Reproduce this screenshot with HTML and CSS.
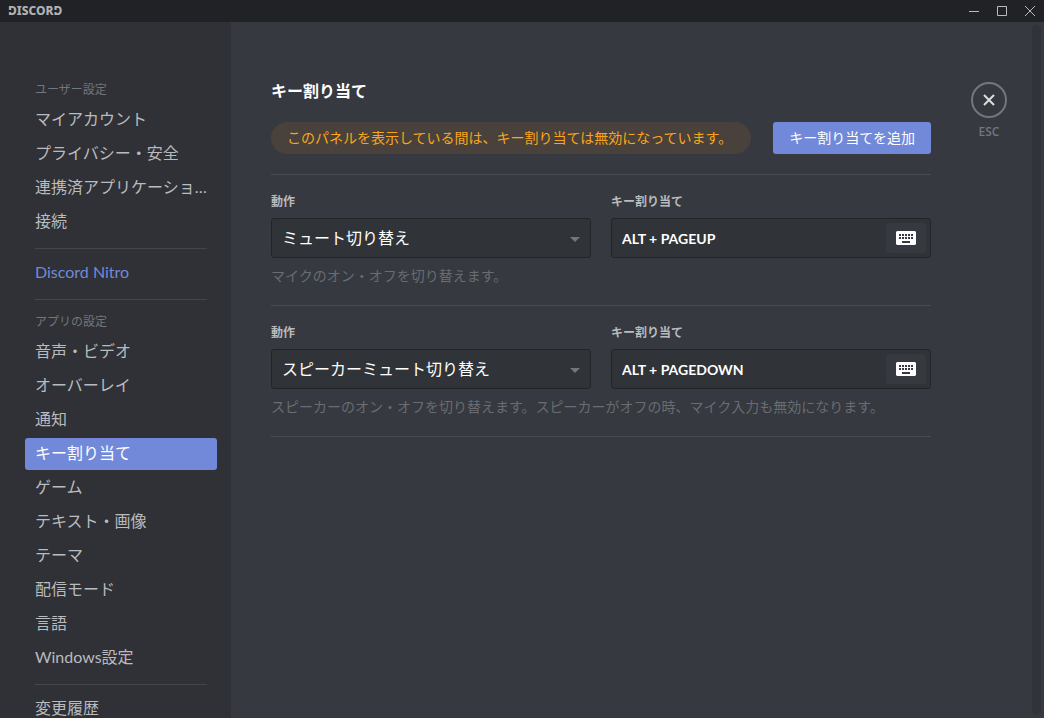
FILE: index.html
```
<!DOCTYPE html>
<html lang="ja">
<head>
<meta charset="utf-8">
<title>Discord</title>
<link rel="stylesheet" href="styles.css">
</head>
<body>
<div class="app">
  <header class="titlebar">
    <div class="wordmark"><span class="notched">D</span>ISCOR<span class="notched">D</span></div>
    <div class="window-controls">
      <button class="window-button" type="button" aria-label="最小化"><svg width="10" height="10" viewBox="0 0 10 10"><path d="M0 5.5h10"/></svg></button>
      <button class="window-button" type="button" aria-label="最大化"><svg width="10" height="10" viewBox="0 0 10 10"><path d="M.5.5h9v9h-9z"/></svg></button>
      <button class="window-button" type="button" aria-label="閉じる"><svg width="10" height="10" viewBox="0 0 10 10"><path d="M0 0l10 10M10 0L0 10"/></svg></button>
    </div>
  </header>
  <div class="body">
    <nav class="sidebar">
      <h2 class="nav-header">ユーザー設定</h2>
      <a class="nav-item" href="#">マイアカウント</a>
      <a class="nav-item" href="#">プライバシー・安全</a>
      <a class="nav-item" href="#">連携済アプリケーション</a>
      <a class="nav-item" href="#">接続</a>
      <hr class="nav-line">
      <a class="nav-item nitro" href="#">Discord Nitro</a>
      <hr class="nav-line">
      <h2 class="nav-header">アプリの設定</h2>
      <a class="nav-item" href="#">音声・ビデオ</a>
      <a class="nav-item" href="#">オーバーレイ</a>
      <a class="nav-item" href="#">通知</a>
      <a class="nav-item selected" href="#" aria-current="page">キー割り当て</a>
      <a class="nav-item" href="#">ゲーム</a>
      <a class="nav-item" href="#">テキスト・画像</a>
      <a class="nav-item" href="#">テーマ</a>
      <a class="nav-item" href="#">配信モード</a>
      <a class="nav-item" href="#">言語</a>
      <a class="nav-item" href="#">Windows設定</a>
      <hr class="nav-line">
      <a class="nav-item" href="#">変更履歴</a>
    </nav>
    <main class="main">
      <section class="content">
        <h1 class="title">キー割り当て</h1>
        <div class="top-row">
          <p class="notice">このパネルを表示している間は、キー割り当ては無効になっています。</p>
          <button class="add" type="button">キー割り当てを追加</button>
        </div>
        <div class="bind">
          <div class="fields">
            <div class="field">
              <label class="label" for="action1">動作</label>
              <div class="box">
                <select class="select" id="action1"><option>ミュート切り替え</option></select>
                <svg class="caret" width="10" height="5" viewBox="0 0 10 5"><path d="M0 0h10L5 5z"/></svg>
              </div>
            </div>
            <div class="field">
              <label class="label" for="key1">キー割り当て</label>
              <div class="box">
                <input class="key" id="key1" type="text" value="ALT + PAGEUP" readonly>
                <button class="record" type="button" aria-label="キーを記録"><svg width="20" height="14" viewBox="0 0 20 14"><path fill-rule="evenodd" d="M1 0h18l1 1v12l-1 1H1l-1-1V1zM3 3v2h2V3zM6 3v2h2V3zM9 3v2h2V3zM12 3v2h2V3zM15 3v2h2V3zM3 6v2h2V6zM6 6v2h2V6zM9 6v2h2V6zM12 6v2h2V6zM15 6v2h2V6zM6 10v2h8v-2z"/></svg></button>
              </div>
            </div>
          </div>
          <p class="help">マイクのオン・オフを切り替えます。</p>
        </div>
        <div class="bind">
          <div class="fields">
            <div class="field">
              <label class="label" for="action2">動作</label>
              <div class="box">
                <select class="select" id="action2"><option>スピーカーミュート切り替え</option></select>
                <svg class="caret" width="10" height="5" viewBox="0 0 10 5"><path d="M0 0h10L5 5z"/></svg>
              </div>
            </div>
            <div class="field">
              <label class="label" for="key2">キー割り当て</label>
              <div class="box">
                <input class="key" id="key2" type="text" value="ALT + PAGEDOWN" readonly>
                <button class="record" type="button" aria-label="キーを記録"><svg width="20" height="14" viewBox="0 0 20 14"><path fill-rule="evenodd" d="M1 0h18l1 1v12l-1 1H1l-1-1V1zM3 3v2h2V3zM6 3v2h2V3zM9 3v2h2V3zM12 3v2h2V3zM15 3v2h2V3zM3 6v2h2V6zM6 6v2h2V6zM9 6v2h2V6zM12 6v2h2V6zM15 6v2h2V6zM6 10v2h8v-2z"/></svg></button>
              </div>
            </div>
          </div>
          <p class="help">スピーカーのオン・オフを切り替えます。スピーカーがオフの時、マイク入力も無効になります。</p>
        </div>
      </section>
      <div class="close-area">
        <button class="close" type="button" aria-label="閉じる"><svg width="12" height="12" viewBox="0 0 12 12"><path d="M1 1l10 10M11 1L1 11"/></svg></button>
        <span class="esc">ESC</span>
      </div>
      <div class="scroll-track"></div>
    </main>
  </div>
</div>
</body>
</html>
```
FILE: styles.css
```
* {
  box-sizing: border-box;
}

body {
  margin: 0;
  background: #36393f;
  color: #fff;
  font-family: "Noto Sans CJK JP", sans-serif;
  font-size: 16px;
}

h1, h2, p {
  margin: 0;
}

button, input, select {
  margin: 0;
  padding: 0;
  border: 0;
  color: inherit;
  font-family: inherit;
}

.app {
  display: flex;
  flex-direction: column;
  height: 100vh;
  overflow: hidden;
}

.titlebar {
  display: flex;
  flex: none;
  align-items: center;
  justify-content: space-between;
  height: 22px;
  padding-left: 8px;
  background: #202225;
}

.wordmark {
  color: #b0b1b3;
  font-family: "Noto Sans", sans-serif;
  font-size: 12px;
  font-weight: 800;
  line-height: 22px;
}

.notched {
  position: relative;
}

.notched::before {
  content: "";
  position: absolute;
  left: 0;
  top: 8px;
  width: 4px;
  height: 2px;
  background: #202225;
}

.window-controls {
  display: flex;
}

.window-button {
  display: flex;
  align-items: center;
  justify-content: center;
  width: 28px;
  height: 22px;
  background: none;
}

.window-button svg {
  fill: none;
  stroke: #b9bbbe;
}

.body {
  display: flex;
  flex: 1;
  min-height: 0;
}

.sidebar {
  display: flex;
  flex: none;
  flex-direction: column;
  width: 231px;
  padding: 54px 14px 0 25px;
  overflow: hidden;
  background: #2f3136;
}

.nav-header {
  flex: none;
  padding: 3px 10px 5px;
  color: #72767d;
  font-size: 12px;
  font-weight: 400;
  line-height: 20px;
}

.nav-item {
  flex: none;
  height: 32px;
  margin-bottom: 2px;
  padding: 0 10px;
  overflow: hidden;
  border-radius: 3px;
  color: #b9bbbe;
  font-family: Lato, "Noto Sans CJK JP", sans-serif;
  line-height: 30px;
  text-decoration: none;
  text-overflow: ellipsis;
  white-space: nowrap;
}

.nitro {
  color: #7289da;
}

.selected {
  background: #7289da;
  color: #fff;
}

.nav-line {
  flex: none;
  height: 1px;
  margin: 8px 10px;
  border: 0;
  background: #43454a;
}

.main {
  display: flex;
  flex: 1;
  min-width: 0;
  padding: 3px 3px 3px 40px;
}

.content {
  flex: 1;
  min-width: 0;
  padding-top: 55px;
}

.title {
  padding-bottom: 2px;
  font-size: 16px;
  font-weight: 700;
  line-height: 20px;
}

.top-row {
  display: flex;
  align-items: center;
  gap: 22px;
  padding: 20px 0;
}

.notice {
  flex: 1;
  padding: 0 16px 2px;
  border-radius: 16px;
  background: #49413c;
  color: #faa61a;
  font-size: 14px;
  line-height: 30px;
  white-space: nowrap;
}

.add {
  padding: 0 16px 2px;
  border-radius: 3px;
  background: #7289da;
  color: #fff;
  font-size: 14px;
  line-height: 30px;
}

.bind {
  padding: 16px 0 20px;
  border-top: 1px solid #484b51;
}

.bind:last-child {
  border-bottom: 1px solid #484b51;
}

.fields {
  display: grid;
  grid-template-columns: 1fr 1fr;
  gap: 20px;
}

.label {
  display: block;
  margin-bottom: 7px;
  color: #b9bbbe;
  font-size: 12px;
  font-weight: 700;
  line-height: 20px;
}

.box {
  display: flex;
  position: relative;
  align-items: center;
  height: 40px;
  padding-right: 4px;
  border: 1px solid #222427;
  border-radius: 3px;
  background: #303338;
}

.select {
  flex: 1;
  height: 38px;
  padding: 0 28px 2px 10px;
  appearance: none;
  background: none;
  font-size: 16px;
}

.caret {
  position: absolute;
  right: 10px;
  top: 18px;
  fill: #72767d;
  pointer-events: none;
}

.key {
  flex: 1;
  min-width: 0;
  padding: 0 10px;
  background: none;
  font-family: Lato, sans-serif;
  font-size: 14px;
  font-weight: 700;
}

.record {
  display: flex;
  align-items: center;
  justify-content: center;
  width: 40px;
  height: 30px;
  border-radius: 3px;
  background: #36393f;
}

.record svg {
  fill: #fff;
}

.help {
  margin-top: 7px;
  color: #686c73;
  font-size: 14px;
  line-height: 20px;
}

.close-area {
  display: flex;
  flex-direction: column;
  align-items: center;
  width: 36px;
  margin: 57px 25px 0 40px;
}

.close {
  display: flex;
  align-items: center;
  justify-content: center;
  width: 36px;
  height: 36px;
  border: 2px solid #72767d;
  border-radius: 50%;
  background: none;
}

.close svg {
  fill: none;
  stroke: #dcddde;
  stroke-width: 2;
}

.esc {
  margin-top: 4px;
  color: #72767d;
  font-family: "Open Sans", sans-serif;
  font-size: 12px;
  font-weight: 600;
  line-height: 20px;
}

.scroll-track {
  width: 9px;
  border-radius: 5px;
  background: #303338;
}
```
